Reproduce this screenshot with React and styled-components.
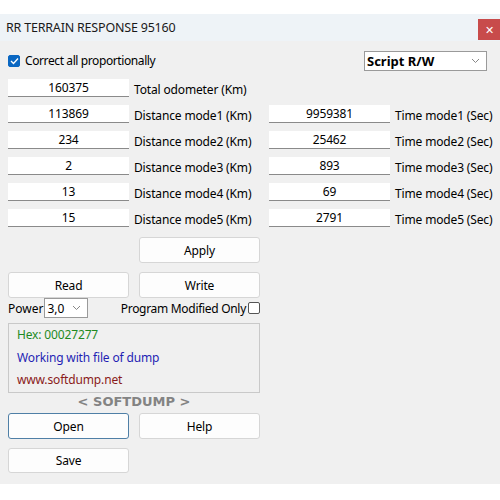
import React from "react";
import styled, { createGlobalStyle } from "styled-components";

const Global = createGlobalStyle`
  html, body { margin: 0; padding: 0; background: #ffffff; }
  body { font-family: "Segoe UI", "Noto Sans", "Open Sans", Arial, sans-serif; font-size: 12px; color: #000; letter-spacing: -0.15px; }
`;

const Window = styled.div`
  margin-top: 14px;
  width: 500px;
  display: flex;
  flex-direction: column;
  overflow: hidden;
`;

const TitleBar = styled.div`
  height: 27px;
  background: #eef3f7;
  display: flex;
  align-items: center;
  justify-content: space-between;
  padding-left: 6px;
  font-size: 12.5px;
  letter-spacing: -0.2px;
  color: #1a1a1a;
`;

const CloseBtn = styled.div`
  width: 22px;
  height: 21px;
  margin-top: 3px;
  background: #c84b4b;
  color: #fff;
  display: flex;
  align-items: center;
  justify-content: center;
  font-size: 11px;
`;

const Body = styled.div`
  background: #f0f0f0;
  padding: 10px 13px 11px 8px;
  display: flex;
  flex-direction: column;
`;

const TopRow = styled.div`
  display: flex;
  align-items: center;
  justify-content: space-between;
  height: 19px;
`;

const CheckLabel = styled.label`
  display: flex;
  align-items: center;
  gap: 5px;
  font-size: 12px;
  letter-spacing: -0.4px;
`;

const Check = styled.span`
  width: 12px;
  height: 12px;
  border-radius: 2px;
  box-sizing: border-box;
  display: inline-flex;
  align-items: center;
  justify-content: center;
  background: ${(p) => (p.$on ? "#0a67c2" : "#ffffff")};
  border: 1px solid ${(p) => (p.$on ? "#0a67c2" : "#555")};
`;

const Select = styled.div`
  box-sizing: border-box;
  width: ${(p) => p.$w}px;
  height: ${(p) => p.$h}px;
  background: #fff;
  border: 1px solid #9a9a9a;
  display: flex;
  align-items: center;
  justify-content: space-between;
  padding: 0 6px 0 2px;
  font-weight: ${(p) => (p.$bold ? 700 : 400)};
  font-size: ${(p) => (p.$bold ? 13 : 12)}px;
  letter-spacing: 0;
`;

const Grid = styled.div`
  margin-top: 9px;
  display: grid;
  grid-template-columns: 121px 140px 121px 1fr;
  grid-auto-rows: 18px;
  row-gap: 8px;
  align-items: center;
`;

const Field = styled.div`
  box-sizing: border-box;
  height: 18px;
  background: #fff;
  border-bottom: 1px solid #8a8a8a;
  display: flex;
  align-items: center;
  justify-content: center;
  font-size: 12px;
`;

const Label = styled.div`
  padding-left: 5px;
  white-space: nowrap;
  font-size: 12px;
  padding-top: 2px;
`;

const Empty = styled.div``;

const ButtonRow = styled.div`
  display: flex;
  gap: 10px;
  margin-top: ${(p) => p.$mt}px;
  padding-left: ${(p) => p.$pl || 0}px;
`;

const Button = styled.div`
  box-sizing: border-box;
  width: 121px;
  height: ${(p) => p.$h || 26}px;
  background: #fdfdfd;
  border: 1px solid ${(p) => (p.$focus ? "#4f7fa6" : "#d6d6d6")};
  border-radius: 3px;
  display: flex;
  align-items: center;
  justify-content: center;
  font-size: 12px;
`;

const PowerRow = styled.div`
  width: 252px;
  display: flex;
  align-items: center;
  justify-content: space-between;
  height: 20px;
`;

const Inline = styled.div`
  display: flex;
  align-items: center;
  gap: ${(p) => p.$gap || 0}px;
  letter-spacing: ${(p) => p.$ls || 0}px;
`;

const InfoBox = styled.div`
  box-sizing: border-box;
  margin-top: 5px;
  width: 252px;
  height: 70px;
  border: 1px solid #c9c9c9;
  padding: 0 8px;
  display: flex;
  flex-direction: column;
  font-size: 12px;
`;

const InfoLine = styled.div`
  color: ${(p) => p.$c};
  height: 23px;
  line-height: 22px;
`;

const Brand = styled.div`
  width: 252px;
  text-align: center;
  font-family: "DejaVu Sans", Verdana, sans-serif;
  font-weight: 700;
  font-size: 13px;
  color: #838383;
  height: 18px;
  line-height: 18px;
  letter-spacing: 0;
`;

const Chevron = () => (
  <svg width="9" height="6" viewBox="0 0 9 6">
    <path d="M1 1 L4.5 4.5 L8 1" fill="none" stroke="#888" strokeWidth="1" />
  </svg>
);

const Tick = () => (
  <svg width="9" height="8" viewBox="0 0 9 8">
    <path d="M1 4 L3.5 6.5 L8 1.5" fill="none" stroke="#fff" strokeWidth="1.3" />
  </svg>
);

const left = [
  ["160375", "Total odometer (Km)"],
  ["113869", "Distance mode1 (Km)"],
  ["234", "Distance mode2 (Km)"],
  ["2", "Distance mode3 (Km)"],
  ["13", "Distance mode4 (Km)"],
  ["15", "Distance mode5 (Km)"],
];
const right = [
  null,
  ["9959381", "Time mode1 (Sec)"],
  ["25462", "Time mode2 (Sec)"],
  ["893", "Time mode3 (Sec)"],
  ["69", "Time mode4 (Sec)"],
  ["2791", "Time mode5 (Sec)"],
];

export default function App() {
  return (
    <>
      <Global />
      <Window>
        <TitleBar>
          <span>RR TERRAIN RESPONSE 95160</span>
          <CloseBtn>✕</CloseBtn>
        </TitleBar>
        <Body>
          <TopRow>
            <CheckLabel>
              <Check $on>
                <Tick />
              </Check>
              Correct all proportionally
            </CheckLabel>
            <Select $w={123} $h={20} $bold>
              <span>Script R/W</span>
              <Chevron />
            </Select>
          </TopRow>
          <Grid>
            {left.map((l, i) => (
              <React.Fragment key={i}>
                <Field>{l[0]}</Field>
                <Label>{l[1]}</Label>
                {right[i] ? (
                  <>
                    <Field>{right[i][0]}</Field>
                    <Label>{right[i][1]}</Label>
                  </>
                ) : (
                  <>
                    <Empty />
                    <Empty />
                  </>
                )}
              </React.Fragment>
            ))}
          </Grid>
          <ButtonRow $mt={10} $pl={131}>
            <Button>Apply</Button>
          </ButtonRow>
          <ButtonRow $mt={9}>
            <Button>Read</Button>
            <Button>Write</Button>
          </ButtonRow>
          <PowerRow>
            <Inline $gap={1}>
              <span>Power</span>
              <Select $w={44} $h={20}>
                <span>3,0</span>
                <Chevron />
              </Select>
            </Inline>
            <Inline $gap={2} $ls={-0.3}>
              <span>Program Modified Only</span>
              <Check />
            </Inline>
          </PowerRow>
          <InfoBox>
            <InfoLine $c="#1f8a1f">Hex: 00027277</InfoLine>
            <InfoLine $c="#1f1fb4">Working with file of dump</InfoLine>
            <InfoLine $c="#8a1a1a">www.softdump.net</InfoLine>
          </InfoBox>
          <Brand>&lt; SOFTDUMP &gt;</Brand>
          <ButtonRow $mt={2}>
            <Button $focus>Open</Button>
            <Button>Help</Button>
          </ButtonRow>
          <ButtonRow $mt={9}>
            <Button $h={25}>Save</Button>
          </ButtonRow>
        </Body>
      </Window>
    </>
  );
}
